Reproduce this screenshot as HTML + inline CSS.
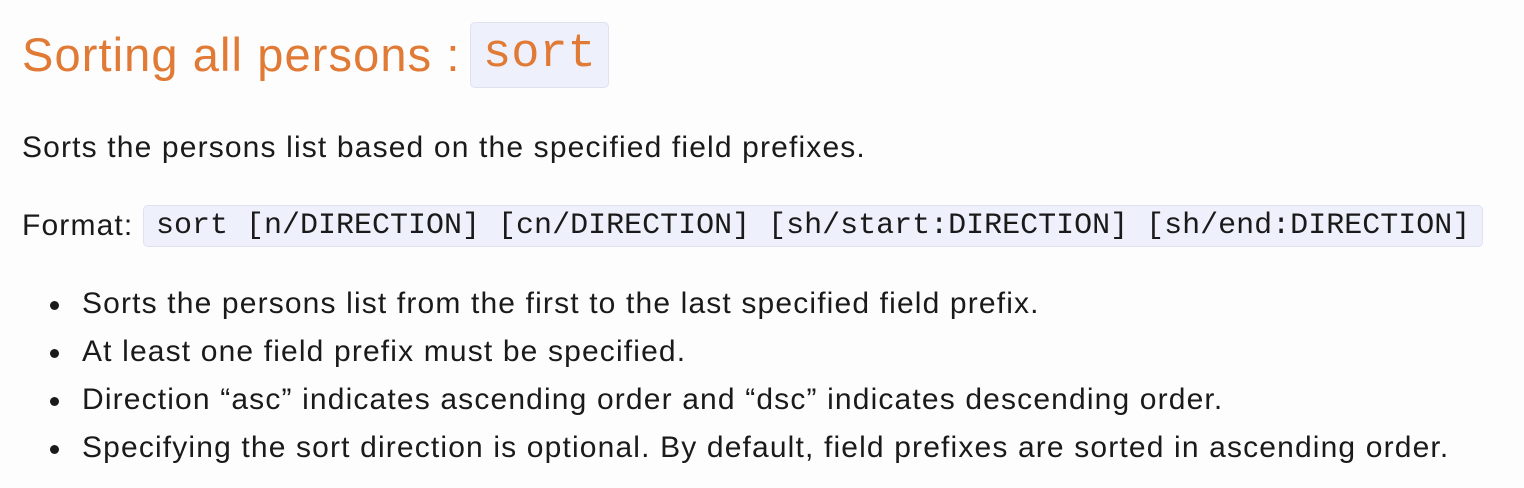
<!DOCTYPE html>
<html><head><style>
body{margin:0;background:#fdfdfd;font-family:"Liberation Sans",sans-serif;color:#1a1a1a;width:1524px;height:488px;overflow:hidden}
h1{position:absolute;left:22px;top:22px;margin:0;font-weight:normal;color:#e07a35;font-size:47px;letter-spacing:1.1px;line-height:66px;white-space:nowrap}
h1 code{position:absolute;left:448px;top:0;display:inline-block;background:#eef0fb;border:1px solid #dfe1ee;border-radius:5px;font-family:"Liberation Mono",monospace;font-size:47px;letter-spacing:0;line-height:64px;padding:0 12px}
.p{position:absolute;left:22px;font-size:30px;letter-spacing:1.15px;white-space:nowrap}
.fmt code{position:absolute;left:121px;top:0;display:inline-block;background:#eef0fb;border:1px solid #dfe1ee;border-radius:5px;font-family:"Liberation Mono",monospace;font-size:30px;letter-spacing:0;line-height:40px;padding:0 12px;color:#1a1a1a}
ul{position:absolute;left:0;top:280px;margin:0;padding:0;list-style:none;font-size:30px;letter-spacing:1.15px}
li{position:relative;padding-left:82px;line-height:48px;white-space:nowrap}
li:before{content:"";position:absolute;left:50px;top:21px;width:9px;height:9px;border-radius:50%;background:#1a1a1a}
</style></head><body>
<h1>Sorting all persons : <code>sort</code></h1>
<div class="p" style="top:131px">Sorts the persons list based on the specified field prefixes.</div>
<div class="p fmt" style="top:205px;line-height:42px">Format: <code>sort [n/DIRECTION] [cn/DIRECTION] [sh/start:DIRECTION] [sh/end:DIRECTION]</code></div>
<ul>
<li>Sorts the persons list from the first to the last specified field prefix.</li>
<li>At least one field prefix must be specified.</li>
<li>Direction “asc” indicates ascending order and “dsc” indicates descending order.</li>
<li>Specifying the sort direction is optional. By default, field prefixes are sorted in ascending order.</li>
</ul>
</body></html>
